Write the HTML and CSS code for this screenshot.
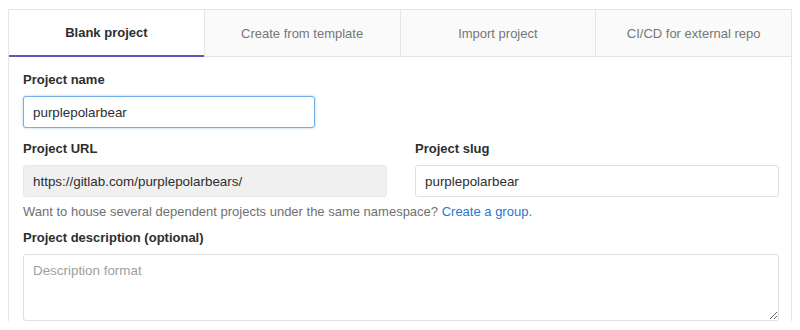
FILE: index.html
```html
<!DOCTYPE html>
<html lang="en">

<head>
    <meta charset="UTF-8">
    <title>New project</title>
    <link rel="stylesheet" href="styles.css">
</head>

<body>
    <div class="panel">
        <div class="tabs">
            <div class="tab active">Blank project</div>
            <div class="tab">Create from template</div>
            <div class="tab">Import project</div>
            <div class="tab">CI/CD for external repo</div>
        </div>

        <form class="content">
            <label class="field-label">Project name</label>
            <input type="text" class="input focused name-input" value="purplepolarbear">

            <div class="row">
                <div class="col">
                    <label class="field-label">Project URL</label>
                    <input type="text" class="input readonly" value="https://gitlab.com/purplepolarbears/" readonly>
                </div>
                <div class="col">
                    <label class="field-label">Project slug</label>
                    <input type="text" class="input" value="purplepolarbear">
                </div>
            </div>

            <p class="help">Want to house several dependent projects under the same namespace? <a href="#">Create a group.</a></p>

            <label class="field-label">Project description (optional)</label>
            <textarea class="input textarea" placeholder="Description format"></textarea>
        </form>
    </div>
</body>

</html>
```

FILE: styles.css
```css
body {
    font-family: "Liberation Sans", Arial, sans-serif;
    background: #fff;
    color: #2e2e2e;
    margin: 0;
    padding: 9px 8px 0 8px;
}

.panel {
    border: 1px solid #e5e5e5;
    border-bottom: none;
}

.tabs {
    display: flex;
    background: #fafafa;
}

.tab {
    flex: 1;
    height: 46px;
    display: flex;
    align-items: center;
    justify-content: center;
    font-size: 13px;
    color: #767676;
    border-bottom: 1px solid #e5e5e5;
    border-left: 1px solid #e5e5e5;
}

.tab:first-child {
    border-left: none;
}

.tab.active {
    background: #fff;
    color: #2e2e2e;
    font-weight: bold;
    border-bottom: 2px solid #6b4fbb;
    height: 45px;
}

.content {
    display: flex;
    flex-direction: column;
    padding: 15px 12px 0 14px;
}

.field-label {
    font-size: 13px;
    font-weight: bold;
    color: #2e2e2e;
    margin-bottom: 9px;
}

.input {
    font-family: inherit;
    font-size: 13.4px;
    color: #2e2e2e;
    height: 32px;
    box-sizing: border-box;
    border: 1px solid #dfdfdf;
    border-radius: 3px;
    padding: 0 9px;
    background: #fff;
    outline: none;
}

.name-input {
    width: 292px;
    margin-bottom: 13px;
}

.focused {
    border-color: #73afea;
    box-shadow: 0 0 3px rgba(31, 120, 209, 0.35);
}

.readonly {
    background: #f0f0f0;
    border-color: #e8e8e8;
}

.row {
    display: flex;
    gap: 28px;
}

.col {
    flex: 1;
    display: flex;
    flex-direction: column;
}

.help {
    font-size: 13px;
    color: #707070;
    margin: 7px 0 11px 0;
}

.help a {
    color: #1f78d1;
    text-decoration: none;
}

.textarea {
    height: 67px;
    padding: 8px 9px;
    resize: vertical;
}

.textarea::placeholder {
    color: #a0a0a0;
}
```
